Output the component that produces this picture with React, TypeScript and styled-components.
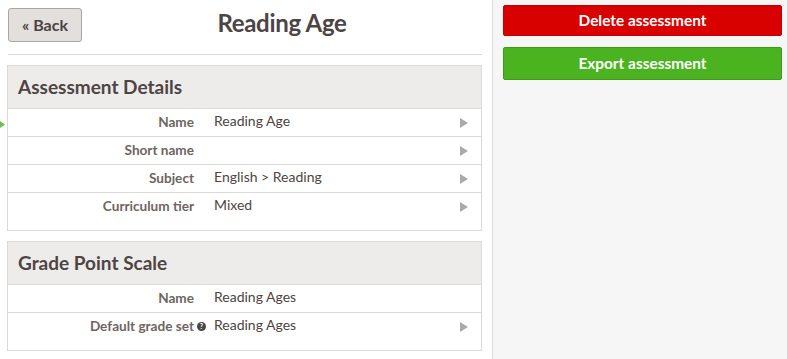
import React from "react";
import styled, { createGlobalStyle } from "styled-components";

const GlobalStyle = createGlobalStyle`
  html, body {
    margin: 0;
    padding: 0;
    background: #ffffff;
  }
  body {
    font-family: "Lato", "Open Sans", sans-serif;
    color: #504846;
  }
  * {
    box-sizing: border-box;
  }
`;

type Row = { label: string; value: string; arrow: boolean; help?: boolean; active?: boolean };

const details: Row[] = [
  { label: "Name", value: "Reading Age", arrow: true, active: true },
  { label: "Short name", value: "", arrow: true },
  { label: "Subject", value: "English > Reading", arrow: true },
  { label: "Curriculum tier", value: "Mixed", arrow: true },
];

const scale: Row[] = [
  { label: "Name", value: "Reading Ages", arrow: false },
  { label: "Default grade set", value: "Reading Ages", arrow: true, help: true },
];

const Arrow = () => (
  <svg width="8" height="10" viewBox="0 0 8 10">
    <path d="M0 0 L8 5 L0 10 Z" fill="#acaaa9" />
  </svg>
);

const HelpIcon = () => (
  <svg width="9" height="9" viewBox="0 0 10 10">
    <circle cx="5" cy="5" r="5" fill="#4a4443" />
    <text x="5" y="8.2" textAnchor="middle" fontSize="8" fontWeight="700" fill="#fff" fontFamily="Lato, sans-serif">
      ?
    </text>
  </svg>
);

const Panel = ({ title, rows }: { title: string; rows: Row[] }) => (
  <Card>
    <CardHeader>{title}</CardHeader>
    <RowList>
      {rows.map((r) => (
        <DetailRow key={r.label}>
          {r.active && (
            <Marker>
              <svg width="5" height="7" viewBox="0 0 5 7">
                <path d="M0 0 L5 3.5 L0 7 Z" fill="#6cc24a" />
              </svg>
            </Marker>
          )}
          <Label>
            {r.label}
            {r.help && (
              <HelpWrap>
                <HelpIcon />
              </HelpWrap>
            )}
          </Label>
          <Value>{r.value}</Value>
          <ArrowCell>{r.arrow && <Arrow />}</ArrowCell>
        </DetailRow>
      ))}
    </RowList>
  </Card>
);

export default function App() {
  return (
    <>
      <GlobalStyle />
      <Page>
        <Main>
          <TopBar>
            <BackButton>« Back</BackButton>
            <Title>Reading Age</Title>
          </TopBar>
          <Divider />
          <Panel title="Assessment Details" rows={details} />
          <Panel title="Grade Point Scale" rows={scale} />
        </Main>
        <Side>
          <ActionButton $color="#d90000" $border="#c40000" $height={31}>
            Delete assessment
          </ActionButton>
          <ActionButton $color="#4bb31f" $border="#3f9a19" $height={33}>
            Export assessment
          </ActionButton>
        </Side>
      </Page>
    </>
  );
}

const Page = styled.div`
  display: flex;
  width: 787px;
  height: 359px;
  overflow: hidden;
`;

const Main = styled.div`
  width: 493px;
  padding: 8px 10px 0 7px;
  border-right: 1px solid #dedcdb;
  background: #fff;
`;

const TopBar = styled.div`
  display: flex;
  align-items: center;
  padding-left: 1px;
`;

const BackButton = styled.button`
  width: 74px;
  height: 34px;
  background: #e3dfdd;
  border: 1px solid #a9a5a4;
  border-radius: 3px;
  font-family: "Lato", sans-serif;
  font-weight: 700;
  font-size: 16px;
  color: #4a4342;
  padding: 0 0 2px;
`;

const Title = styled.h1`
  flex: 1;
  margin: 0;
  padding-bottom: 5px;
  text-align: center;
  font-size: 24px;
  font-weight: 700;
  color: #4d4543;
  letter-spacing: -0.3px;
`;

const Divider = styled.div`
  height: 1px;
  background: #dedcdb;
  margin: 12px 0 10px 1px;
`;

const Card = styled.div`
  border: 1px solid #dcdad9;
  margin-bottom: 10px;
  padding-bottom: 9px;
`;

const CardHeader = styled.div`
  height: 43px;
  background: #eeeceb;
  border-bottom: 1px solid #dcdad9;
  padding: 0 10px 2px;
  display: flex;
  align-items: center;
  font-size: 19px;
  font-weight: 700;
  color: #4d4543;
`;

const RowList = styled.div`
  display: flex;
  flex-direction: column;
`;

const DetailRow = styled.div`
  position: relative;
  display: grid;
  grid-template-columns: 186px 1fr 21px;
  column-gap: 20px;
  height: 28px;
  padding-top: 3px;
  border-bottom: 1px solid #dcdad9;
  &:last-child {
    border-bottom: none;
  }
`;

const Marker = styled.span`
  position: absolute;
  left: -8px;
  top: 12px;
  line-height: 0;
`;

const Label = styled.div`
  text-align: right;
  font-size: 13.6px;
  font-weight: 700;
  color: #6e6563;
  padding-top: 2px;
  display: flex;
  justify-content: flex-end;
  align-items: flex-start;
`;

const HelpWrap = styled.span`
  margin-left: 3px;
  margin-right: -12px;
  padding-top: 4px;
  line-height: 0;
`;

const Value = styled.div`
  font-size: 14px;
  color: #4d4543;
`;

const ArrowCell = styled.div`
  padding-top: 6px;
  line-height: 0;
`;

const Side = styled.div`
  flex: 1;
  background: #f6f6f6;
  padding: 5px 5px 0 10px;
  display: flex;
  flex-direction: column;
  gap: 11px;
`;

const ActionButton = styled.button<{ $color: string; $border: string; $height: number }>`
  height: ${(p) => p.$height}px;
  background: ${(p) => p.$color};
  border: 1px solid ${(p) => p.$border};
  border-radius: 2px;
  color: #fff;
  font-family: "Lato", sans-serif;
  font-weight: 700;
  font-size: 15.4px;
  padding: 0 0 2px;
`;
